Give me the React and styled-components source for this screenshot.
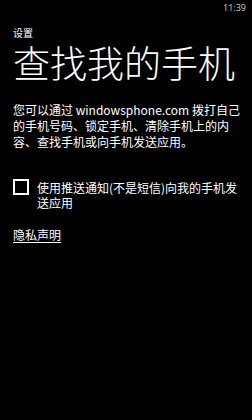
import React from "react";
import styled, { createGlobalStyle } from "styled-components";

const Global = createGlobalStyle`
  html, body { margin: 0; padding: 0; background: #000; }
  body { width: 252px; height: 420px; overflow: hidden; }
`;

const CJK = `"Noto Sans CJK SC", sans-serif`;

const Screen = styled.div`
  width: 252px;
  height: 420px;
  background: #000;
  color: #fff;
  font-family: ${CJK};
  display: flex;
  flex-direction: column;
`;

const StatusBar = styled.div`
  height: 16px;
  display: flex;
  justify-content: flex-end;
  align-items: center;
  padding-right: 6px;
  font-family: "Open Sans", sans-serif;
  font-size: 9px;
  line-height: 10px;
  color: #c8c8c8;
`;

const Content = styled.div`
  padding: 0 13px;
  display: flex;
  flex-direction: column;
`;

const AppName = styled.div`
  margin-top: 11px;
  font-size: 10px;
  line-height: 12px;
`;

const Title = styled.h1`
  margin: 4px 0 0 0;
  font-size: 37px;
  line-height: 38px;
  font-weight: 300;
  white-space: nowrap;
`;

const Description = styled.p`
  margin: 21px 0 0 0;
  width: 227px;
  font-size: 12px;
  line-height: 16px;
`;

const CheckRow = styled.label`
  margin-top: 29px;
  display: flex;
  align-items: flex-start;
  gap: 8px;
`;

const Box = styled.span`
  flex: none;
  width: 16px;
  height: 16px;
  box-sizing: border-box;
  border: 2px solid #fff;
`;

const CheckText = styled.span`
  font-size: 12px;
  line-height: 15px;
  padding-top: 1px;
`;

const Link = styled.a`
  margin-top: 18px;
  align-self: flex-start;
  font-size: 12px;
  line-height: 14px;
  color: #fff;
  text-decoration: underline;
  text-underline-offset: 2px;
`;

export default function App() {
  return (
    <Screen>
      <Global />
      <StatusBar>11:39</StatusBar>
      <Content>
        <AppName>设置</AppName>
        <Title>查找我的手机</Title>
        <Description>
          您可以通过 windowsphone.com 拨打自己的手机号码、锁定手机、清除手机上的内容、查找手机或向手机发送应用。
        </Description>
        <CheckRow>
          <Box />
          <CheckText>使用推送通知(不是短信)向我的手机发送应用</CheckText>
        </CheckRow>
        <Link href="#">隐私声明</Link>
      </Content>
    </Screen>
  );
}
